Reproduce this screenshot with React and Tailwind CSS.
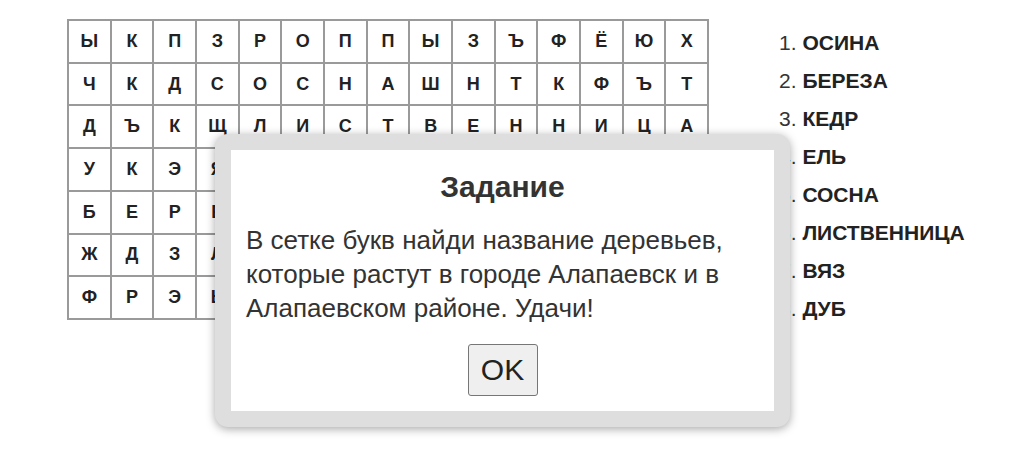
import React from "react";

const rows = [
  "ЫКПЗРОППЫЗЪФЁЮХ",
  "ЧКДСОСНАШНТКФЪТ",
  "ДЪКЩЛИСТВЕННИЦА",
  "УКЭЯЛСВЯЗЖМКЕЛЬ",
  "БЕРЕЗАГУДУБЫРНО",
  "ЖДЗЛЕНИШКЕДРЦПТ",
  "ФРЭЬОСИНАЙЦЮФЩЗ",
];

const words = ["ОСИНА", "БЕРЕЗА", "КЕДР", "ЕЛЬ", "СОСНА", "ЛИСТВЕННИЦА", "ВЯЗ", "ДУБ"];

const App = () => {
  return (
    <div
      className="relative w-[1024px] h-[470px] bg-white overflow-hidden"
      style={{ fontFamily: '"Liberation Sans", Arial, sans-serif' }}
    >
      <div className="flex pl-[67px] pt-[19px]">
        {/* letter grid */}
        <div className="border border-[#9a9a9a] w-[642px] h-[301px] grid grid-cols-[repeat(15,1fr)] grid-rows-[repeat(7,1fr)]">
          {rows.map((row, r) =>
            row.split("").map((ch, c) => (
              <div
                key={r + "-" + c}
                className="border border-[#9a9a9a] flex items-center justify-center text-[18px] font-bold text-[#222]"
              >
                {ch}
              </div>
            ))
          )}
        </div>

        {/* word list */}
        <ol className="ml-[70px] pt-[12px] text-[21px] text-[#222]">
          {words.map((w, i) => (
            <li key={w} className="h-[38px] leading-[24px]">
              <span className="text-[#333]">{i + 1}.</span> <span className="font-bold">{w}</span>
            </li>
          ))}
        </ol>
      </div>

      {/* modal */}
      <div className="absolute left-[215px] top-[134px] w-[575px] h-[293px] bg-[#dedede] rounded-[13px] p-[16px] shadow-[0_2px_10px_rgba(0,0,0,0.35)]">
        <div className="bg-white h-full px-[15px] pt-[20px] flex flex-col items-center text-[#333]">
          <h2 className="text-[30px] font-bold leading-[34px] text-[#333]">Задание</h2>
          <p className="self-start mt-[19px] text-[26px] leading-[34px]">
            В сетке букв найди название деревьев, которые растут в городе Алапаевск и в Алапаевском районе. Удачи!
          </p>
          <button className="mt-[19px] w-[70px] h-[52px] bg-[#efefef] border border-[#767676] rounded-[3px] text-[30px] leading-none text-[#222]">
            OK
          </button>
        </div>
      </div>
    </div>
  );
};

export default App;
